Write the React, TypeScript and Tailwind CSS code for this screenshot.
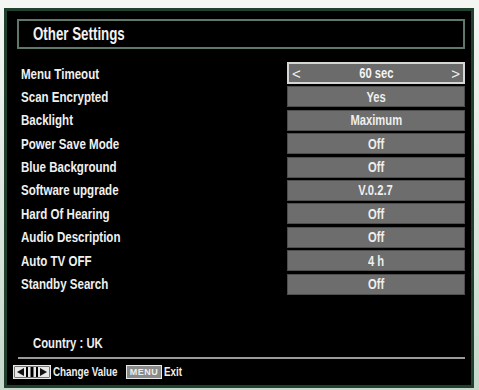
const rows: [string, string][] = [
  ["Menu Timeout", "60 sec"],
  ["Scan Encrypted", "Yes"],
  ["Backlight", "Maximum"],
  ["Power Save Mode", "Off"],
  ["Blue Background", "Off"],
  ["Software upgrade", "V.0.2.7"],
  ["Hard Of Hearing", "Off"],
  ["Audio Description", "Off"],
  ["Auto TV OFF", "4 h"],
  ["Standby Search", "Off"],
];

// the TV menu font is a narrow sans; Liberation Sans squeezed horizontally stands in for it
const tvFont = "font-['Liberation_Sans',Arial,sans-serif]";

function ArrowsKey() {
  return (
    <svg width="38" height="14" viewBox="0 0 38 14">
      <rect x="0.75" y="0.75" width="36.5" height="12.5" fill="#000" stroke="#e8e8e8" strokeWidth="1.5" />
      <rect x="2" y="2" width="11" height="10" fill="#e8e8e8" />
      <polygon points="4,7 11,3 11,11" fill="#111" />
      <rect x="15" y="2" width="2.5" height="10" fill="#e8e8e8" />
      <rect x="20.5" y="2" width="2.5" height="10" fill="#e8e8e8" />
      <rect x="25" y="2" width="11" height="10" fill="#e8e8e8" />
      <polygon points="34,7 27,3 27,11" fill="#111" />
    </svg>
  );
}

export default function App() {
  return (
    <div className={`w-[479px] h-[390px] bg-gradient-to-b from-[#f4f6f3] to-[#c5d8ca] pt-[8px] pl-[4px] pr-[5px] pb-[2px] ${tvFont}`}>
      <div className="h-full flex flex-col bg-black border-[3px] border-[#21402d]">
        {/* title bar */}
        <div className="ml-[10px] mr-[6px] mt-[8px] h-[30px] border-2 border-[#60786a] flex items-center pl-[14px]">
          <span className="inline-block origin-left scale-x-[0.74] text-[18px] font-bold text-[#f2f2f2] whitespace-nowrap">Other Settings</span>
        </div>

        {/* settings list */}
        <div className="mt-[14px] flex flex-col gap-[2.4px] pl-[14px] mr-[6px]">
          {rows.map(([label, value], i) => (
            <div key={label} className="flex items-center h-[21px]">
              <div className="flex-1">
                <span className="inline-block origin-left scale-x-[0.77] text-[15px] font-bold text-[#f0f0f0] leading-none whitespace-nowrap">{label}</span>
              </div>
              {i === 0 ? (
                <div className="w-[178px] h-[22px] -mt-[1px] border-2 border-[#d6d6d6] bg-[#6b6b6b] flex items-center justify-between px-[3px] text-[#f4f4f4]">
                  <span className="text-[15px] leading-none">&lt;</span>
                  <span className="inline-block scale-x-[0.8] text-[14px] font-bold leading-none">{value}</span>
                  <span className="text-[15px] leading-none">&gt;</span>
                </div>
              ) : (
                <div className="w-[178px] h-[21px] border border-[#4e4e4e] bg-[#6d6d6d] flex items-center justify-center">
                  <span className="inline-block scale-x-[0.8] text-[14px] font-bold text-[#eeeeee] leading-none">{value}</span>
                </div>
              )}
            </div>
          ))}
        </div>

        <div className="flex-1" />

        {/* bottom info */}
        <div className="pl-[26px] leading-none">
          <span className="inline-block origin-left scale-x-[0.78] text-[14.5px] font-bold text-[#eeeeee] whitespace-nowrap">Country : UK</span>
        </div>
        <div className="mt-[6px] ml-[11px] mr-[6px] h-[2px] bg-[#9a9a9a]" />
        <div className="h-[26px] flex items-center pl-[6px] text-[12px] font-bold text-[#eeeeee]">
          <ArrowsKey />
          <span className="ml-[2px] w-[73px] inline-block origin-left scale-x-[0.82] whitespace-nowrap">Change Value</span>
          <span className="w-[36px] h-[14px] border-[1.5px] border-[#e8e8e8] bg-[#8a8a8a] flex items-center justify-center text-[9px] tracking-[0.5px] leading-none">MENU</span>
          <span className="ml-[2px] inline-block origin-left scale-x-[0.82]">Exit</span>
        </div>
      </div>
    </div>
  );
}
